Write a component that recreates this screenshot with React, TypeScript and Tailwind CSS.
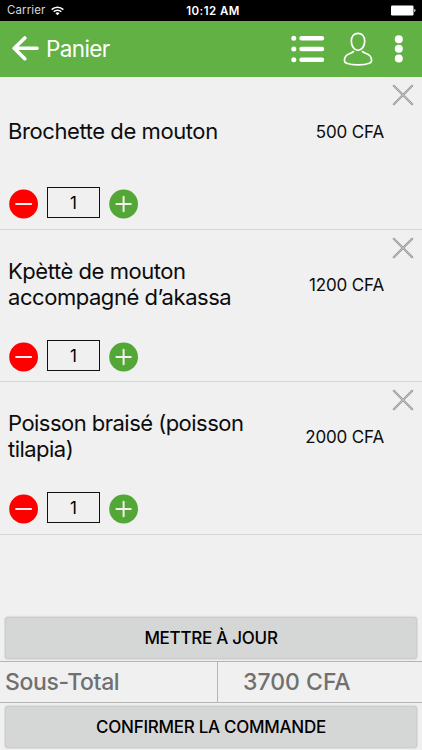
import React from 'react';

type Item = { lines: string[]; price: string; height: string; tracking: string };

const items: Item[] = [
  { lines: ['Brochette de mouton'], price: '500 CFA', height: 'h-[153px]', tracking: 'tracking-[-0.42px]' },
  { lines: ['Kpèttè de mouton', 'accompagné d’akassa'], price: '1200 CFA', height: 'h-[152px]', tracking: 'tracking-[-0.45px]' },
  { lines: ['Poisson braisé (poisson', 'tilapia)'], price: '2000 CFA', height: 'h-[153px]', tracking: 'tracking-[-0.53px]' },
];

function StatusBar() {
  return (
    <div className="grid h-[21px] shrink-0 grid-cols-3 items-center bg-black text-[11.5px] leading-none text-white">
      <div className="flex items-center gap-[5px] pl-[7px] pt-px">
        <span className="tracking-[0.12px] text-[#d8d8d8]">Carrier</span>
        <svg width="13" height="10" viewBox="0 0 13 10" fill="none" stroke="white" strokeWidth="1.6">
          <path d="M.7 3.6a8.2 8.2 0 0 1 11.6 0M2.7 5.8a5.4 5.4 0 0 1 7.6 0" />
          <path d="M6.5 9.2 4.5 7.2a2.8 2.8 0 0 1 4 0z" fill="white" stroke="none" />
        </svg>
      </div>
      <span className="pl-[4px] pt-[2px] text-center font-semibold tracking-[0.45px]">10:12 AM</span>
      <svg className="mr-[6px] justify-self-end" width="25" height="11" viewBox="0 0 25 11" fill="white">
        <rect x="0" y=".5" width="22.5" height="10" rx="1.2" />
        <path d="M23.3 3.8c1.6.4 1.6 3 0 3.4z" />
      </svg>
    </div>
  );
}

function Header() {
  return (
    <header className="flex h-14 shrink-0 items-center bg-[#62b145] pl-3 pr-[19px] text-white">
      <svg width="28" height="26" viewBox="0 0 28 26" fill="none" stroke="white" strokeWidth="3.6" strokeLinecap="round" strokeLinejoin="round">
        <path d="M12.8 2 2.2 12.2l10.6 10.5M2.5 12.2H25" />
      </svg>
      <h1 className="ml-[6px] text-[22.5px] leading-none tracking-[-0.62px]">Panier</h1>
      <svg className="ml-auto" width="34" height="28" viewBox="0 0 34 28" fill="none" stroke="white" strokeWidth="4.4" strokeLinecap="round">
        <path d="M10.5 3.2h20.5M10.5 14h20.5M10.5 24.8h20.5" />
        <path d="M2.8 3.2h.01M2.8 14h.01M2.8 24.8h.01" strokeWidth="5" />
      </svg>
      <svg className="ml-[18px]" width="30" height="34" viewBox="0 0 30 34" fill="none" stroke="white" strokeWidth="1.7">
        <path d="M15 1.3c4.2 0 6.7 3.2 6.7 7.8 0 5-2.8 9.2-6.7 9.2s-6.7-4.2-6.7-9.2c0-4.6 2.5-7.8 6.7-7.8z" />
        <path d="M10.9 19c-.8 1.5-2.6 2-4.7 2.8C2.5 23.2 1.5 25 1.4 28.6c0 1.6.6 2 2.2 2.6 3 1.1 7 1.6 11.4 1.6s8.4-.5 11.4-1.6c1.6-.6 2.2-1 2.2-2.6-.1-3.6-1.1-5.4-4.8-6.8-2.1-.8-3.9-1.3-4.7-2.8" />
      </svg>
      <svg className="ml-[21px]" width="9" height="28" viewBox="0 0 9 28" fill="white">
        <circle cx="4.8" cy="4.2" r="4" />
        <circle cx="4.8" cy="13.8" r="4" />
        <circle cx="4.8" cy="23.4" r="4" />
      </svg>
    </header>
  );
}

function RoundButton({ plus = false }: { plus?: boolean }) {
  return (
    <button aria-label={plus ? 'Plus' : 'Moins'} className="block">
      <svg width="30" height="30" viewBox="0 0 30 30">
        <circle cx="14.6" cy="15" r="14.4" fill={plus ? '#52a736' : '#ff0000'} />
        <path d={plus ? 'M7.4 15h14.4M14.6 7.8v14.4' : 'M7.1 15h15'} stroke="#f8f0f0" strokeWidth="2" strokeLinecap="round" />
      </svg>
    </button>
  );
}

function CartRow({ item }: { item: Item }) {
  return (
    <li className={`${item.height} relative flex flex-col border-b border-[#d5d5d5]`}>
      <div className="flex h-[108px] items-center justify-between pl-2 pr-[38px]">
        <div className={`${item.tracking} text-[22px] leading-[26px] text-[#0c0c0c]`}>
          {item.lines.map((line) => (
            <div key={line} className="whitespace-nowrap">{line}</div>
          ))}
        </div>
        <div className="whitespace-nowrap pt-[1px] text-[17px] leading-6 tracking-[-0.15px] text-[#0c0c0c]">{item.price}</div>
      </div>
      <div className="flex items-start pl-[9px] pt-[2px]">
        <div className="pt-[2px]">
          <RoundButton />
        </div>
        <div className="ml-2 mr-[9px] flex h-[31px] w-[53px] items-center justify-center border border-[#111] pt-px text-[17px] leading-none">1</div>
        <div className="pt-[2px]">
          <RoundButton plus />
        </div>
      </div>
      <button aria-label="Supprimer" className="absolute right-2 top-[7px]">
        <svg width="22" height="22" viewBox="0 0 22 22" fill="none" strokeLinecap="round">
          <path d="M1.8 1.8l18.4 18.4M20.2 1.8 1.8 20.2" stroke="#999" strokeWidth="2.2" />
          <path d="M1.8 1.8l18.4 18.4M20.2 1.8 1.8 20.2" stroke="#c8c8c8" strokeWidth=".8" />
        </svg>
      </button>
    </li>
  );
}

function ActionButton({ children }: { children: React.ReactNode }) {
  return (
    <button className="mx-[5px] h-[42px] shrink-0 rounded-[3px] border border-[#cbcdcc] bg-[#d5d7d6] pt-px text-[17px] font-medium leading-none tracking-[-0.27px] text-black shadow-[0_0_2px_rgba(0,0,0,0.25)]">
      {children}
    </button>
  );
}

export default function App() {
  return (
    <div className="flex h-[750px] w-[422px] flex-col overflow-hidden bg-[#f0f0f0] font-['Inter','Liberation_Sans',sans-serif]">
      <StatusBar />
      <Header />
      <ul className="flex-1">
        {items.map((item) => (
          <CartRow key={item.price} item={item} />
        ))}
      </ul>
      <ActionButton>METTRE À JOUR</ActionButton>
      <div className="mb-[3px] mt-[2px] flex h-[42px] shrink-0 border-y border-[#b5b5b5] text-[23px] font-medium leading-none text-[#707070]">
        <div className="flex w-[218px] items-center border-r border-[#b5b5b5] pl-[5px] pt-px tracking-[-0.35px]">Sous-Total</div>
        <div className="flex items-center pl-[25px] pt-px">3700 CFA</div>
      </div>
      <ActionButton>CONFIRMER LA COMMANDE</ActionButton>
      <div className="h-[2px] shrink-0" />
    </div>
  );
}
